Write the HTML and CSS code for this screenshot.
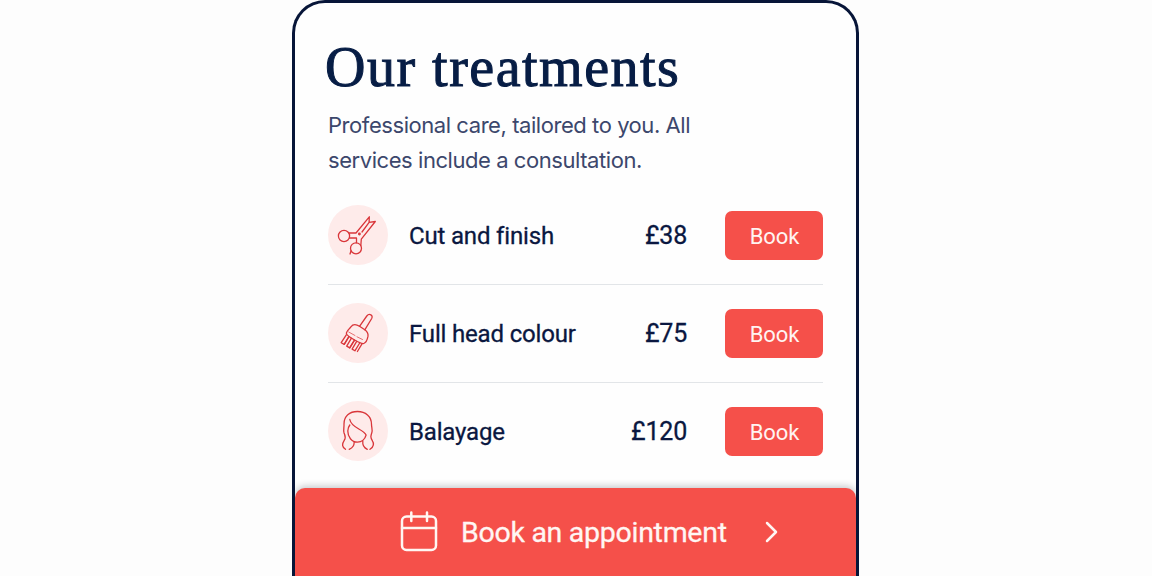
FILE: index.html
```html
<!DOCTYPE html>
<html lang="en">
<head>
<meta charset="utf-8">
<title>Our treatments</title>
<link rel="stylesheet" href="styles.css">
</head>
<body>
<main class="card">
  <header class="intro">
    <h1 class="title">Our treatments</h1>
    <p class="lead">Professional care, tailored to you. All<br>services include a consultation.</p>
  </header>
  <ul class="list">
    <li class="row">
      <span class="badge">
        <svg class="icon" viewBox="0 0 60 60">
          <circle cx="16" cy="31" r="5.600"/>
          <circle cx="28" cy="43.300" r="5.500"/>
          <path d="M21 28h7L41.300 11.800l-.2 5.500 6.200-.8L33.300 34.200l-.5 6.500M28.500 37.700v-4.700h-7M23 46l-1 3M41.100 17.300 34 27"/>
          <circle cx="31.400" cy="29" r=".8"/>
        </svg>
      </span>
      <span class="name">Cut and finish</span>
      <span class="price">£38</span>
      <button class="book">Book</button>
    </li>
    <li class="row">
      <span class="badge">
        <svg class="icon" viewBox="0 0 60 60">
          <path d="M31.500 23.300 38.800 13c2.500-3.200 6.700-.8 4.900 2.500L36.800 26.800"/>
          <path d="M31.500 23.300c-3.500-2.300-6.600-2.200-8.600.5-1.700 2.300-4.600 4.400-4.500 6.700.2 2.600 14.800 10.800 17.400 10 2.300-.8 3.700-4.600 4.200-7.300.4-2.900-.8-4.700-3.200-6.400Z"/>
          <path d="M18.300 31.800 13.200 39.700l3 1.700 4.700-7.700M23.300 35.300l-4.600 7.800 3 1.800 4.800-7.800M28.700 38.300l-4.600 7.800 2.800 1.700 4.800-7.800M34 40.800l-4.600 7.700"/>
          <path d="m20.700 34-4.500 7.400M26.500 37.200l-4.800 7.700"/>
          <path class="thin" d="m20.700 29 6.300 3.500M29 33.800l5.500 2.700"/>
        </svg>
      </span>
      <span class="name">Full head colour</span>
      <span class="price">£75</span>
      <button class="book">Book</button>
    </li>
    <li class="row">
      <span class="badge">
        <svg class="icon" viewBox="0 0 60 60">
          <path d="M17.500 48.300c-3.600-2.300-3.700-5.200-1.400-8.600 2.400-3.500.8-5.200-.1-8-.8-3.300.2-5 0-8.800C16 15 21.500 10.500 29.500 10.500S43.500 15.500 43.500 23.200c0 3.700 1.300 5.300.3 8.500-1.100 3.500-1.500 4.700.5 7.900 2.200 3.400 1 6.500-2.300 8.700"/>
          <path d="M21.800 18.500c1.600 8.800 13.200 9.200 16.300 15.500-1 3.800-4.200 7.200-8.600 7.200-6 0-9.700-5.400-9.700-11.200 0-2.500.7-4.300 2-6M26 40.700c.6 3.300-.8 6-4.800 7.600M34.800 40.200c-.4 3.500 1 6.300 4.500 8.100"/>
        </svg>
      </span>
      <span class="name">Balayage</span>
      <span class="price">£120</span>
      <button class="book">Book</button>
    </li>
  </ul>
  <button class="cta">
    <svg class="calendar" viewBox="0 0 38 42">
      <rect x="2" y="5.500" width="34" height="33.500" rx="4.500"/>
      <path d="M2 17H36M11.300 1.500V10M27 1.500V10"/>
    </svg>
    <span class="cta-label">Book an appointment</span>
    <svg class="chevron" viewBox="0 0 14 22"><path d="m3 2 9 9-9 9"/></svg>
  </button>
</main>
</body>
</html>
```
FILE: styles.css
```css
* {
  box-sizing: border-box;
}

body {
  margin: 0;
  background: #fdfdfd;
  color: #0a1740;
  font-family: Roboto, "Liberation Sans", sans-serif;
}

.card {
  width: 567px;
  height: 576px;
  margin-left: 292px;
  overflow: hidden;
  border: 3px solid #071538;
  border-bottom: 0;
  border-radius: 33px 33px 0 0;
  background: #fefefe;
}

.intro {
  height: 184px;
  padding: 32px 30px 0 33px;
}

.title {
  margin: 0 0 0 -3px;
  font: 400 56px/64px "Liberation Serif", serif;
  letter-spacing: 1.5px;
  color: #071d45;
  -webkit-text-stroke: 1px #071d45;
  white-space: nowrap;
}

.lead {
  margin: 9px 0 0;
  font-family: Inter, sans-serif;
  font-size: 22px;
  line-height: 34.5px;
  letter-spacing: -0.44px;
  color: #3c476c;
  white-space: nowrap;
}

.list {
  margin: 0;
  padding: 0 33px;
  list-style: none;
}

.row {
  display: flex;
  align-items: center;
  height: 98px;
  border-bottom: 1px solid #e2e5e8;
}

.row:last-child {
  border-bottom-color: transparent;
}

.badge {
  width: 60px;
  height: 60px;
  margin-top: -1px;
  border-radius: 50%;
  background: #feebea;
}

.icon {
  display: block;
  width: 60px;
  height: 60px;
  fill: none;
  stroke: #d9363a;
  stroke-width: 1.3;
  stroke-linecap: round;
  stroke-linejoin: round;
}

.thin {
  stroke-width: 0.7;
}

.name {
  flex: 1;
  padding-left: 21px;
  font-size: 24px;
  line-height: 32px;
  letter-spacing: -0.17px;
  -webkit-text-stroke: 0.3px currentColor;
  white-space: nowrap;
}

.price {
  margin-right: 38px;
  font-size: 25px;
  line-height: 32px;
  letter-spacing: -0.2px;
  -webkit-text-stroke: 0.3px currentColor;
}

.book {
  width: 98px;
  height: 49px;
  padding: 2px 0 0 1px;
  border: 0;
  border-radius: 7px;
  background: #f5504a;
  color: #fff4f2;
  font: 400 22px/28px Roboto, sans-serif;
  letter-spacing: -0.1px;
}

.cta {
  display: flex;
  align-items: center;
  width: 561px;
  height: 88px;
  margin-top: 7px;
  padding: 0 0 0 105px;
  border: 0;
  border-radius: 10px 10px 0 0;
  background: #f5504a;
  box-shadow: 0 -2px 7px rgba(20, 30, 40, 0.24);
  color: #fff6f3;
  text-align: left;
}

.calendar {
  flex: none;
  width: 38px;
  height: 42px;
  fill: none;
  stroke: currentColor;
  stroke-width: 2.5;
  stroke-linecap: round;
}

.cta-label {
  flex: none;
  width: 326px;
  padding: 1px 0 0 23px;
  font: 400 28.5px/36px Roboto, sans-serif;
  letter-spacing: -0.28px;
  -webkit-text-stroke: 0.3px currentColor;
  white-space: nowrap;
}

.chevron {
  flex: none;
  width: 14px;
  height: 22px;
  fill: none;
  stroke: currentColor;
  stroke-width: 2.5;
  stroke-linecap: round;
  stroke-linejoin: round;
}
```
